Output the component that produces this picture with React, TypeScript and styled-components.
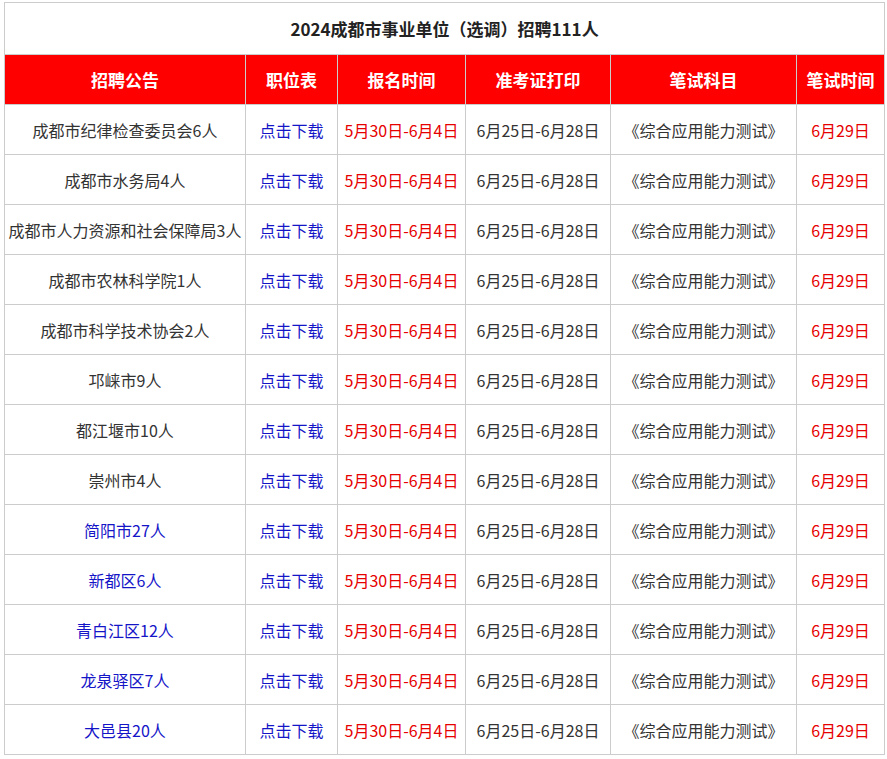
import React from "react";
import styled, { createGlobalStyle } from "styled-components";

const Global = createGlobalStyle`
  body { margin: 0; padding: 2px 3px 0 4px; background: #fff; font-family: "Microsoft YaHei", "Noto Sans CJK SC", sans-serif; }
`;

const Table = styled.table`
  width: 880px;
  border-collapse: collapse;
  table-layout: fixed;
  font-size: 16px;
  color: #333;
`;

const TitleCell = styled.td`
  height: 49px;
  border: 1px solid #ccc;
  text-align: center;
  font-weight: bold;
  font-size: 17px;
  color: #222;
`;

const Head = styled.th`
  height: 49px;
  background: #ff0000;
  color: #fff;
  font-weight: bold;
  font-size: 17px;
  border: 1px solid #ccc;
  text-align: center;
  padding: 0;
`;

const Cell = styled.td<{ $c?: string }>`
  height: 49px;
  border: 1px solid #ccc;
  text-align: center;
  padding: 0;
  white-space: nowrap;
  color: ${(p) => p.$c || "#333"};
`;

const BLUE = "#1515c8";
const RED = "#e60000";

const rows: [string, boolean][] = [
  ["成都市纪律检查委员会6人", false],
  ["成都市水务局4人", false],
  ["成都市人力资源和社会保障局3人", false],
  ["成都市农林科学院1人", false],
  ["成都市科学技术协会2人", false],
  ["邛崃市9人", false],
  ["都江堰市10人", false],
  ["崇州市4人", false],
  ["简阳市27人", true],
  ["新都区6人", true],
  ["青白江区12人", true],
  ["龙泉驿区7人", true],
  ["大邑县20人", true],
];

export default function App() {
  return (
    <>
      <Global />
      <Table>
        <colgroup>
          <col style={{ width: 241 }} />
          <col style={{ width: 92 }} />
          <col style={{ width: 128 }} />
          <col style={{ width: 145 }} />
          <col style={{ width: 186 }} />
          <col style={{ width: 88 }} />
        </colgroup>
        <tbody>
          <tr>
            <TitleCell colSpan={6}>2024成都市事业单位（选调）招聘111人</TitleCell>
          </tr>
          <tr>
            <Head>招聘公告</Head>
            <Head>职位表</Head>
            <Head>报名时间</Head>
            <Head>准考证打印</Head>
            <Head>笔试科目</Head>
            <Head>笔试时间</Head>
          </tr>
          {rows.map(([name, blue]) => (
            <tr key={name}>
              <Cell $c={blue ? BLUE : "#333"}>{name}</Cell>
              <Cell $c={BLUE}>点击下载</Cell>
              <Cell $c={RED}>5月30日-6月4日</Cell>
              <Cell>6月25日-6月28日</Cell>
              <Cell>《综合应用能力测试》</Cell>
              <Cell $c={RED}>6月29日</Cell>
            </tr>
          ))}
        </tbody>
      </Table>
    </>
  );
}
